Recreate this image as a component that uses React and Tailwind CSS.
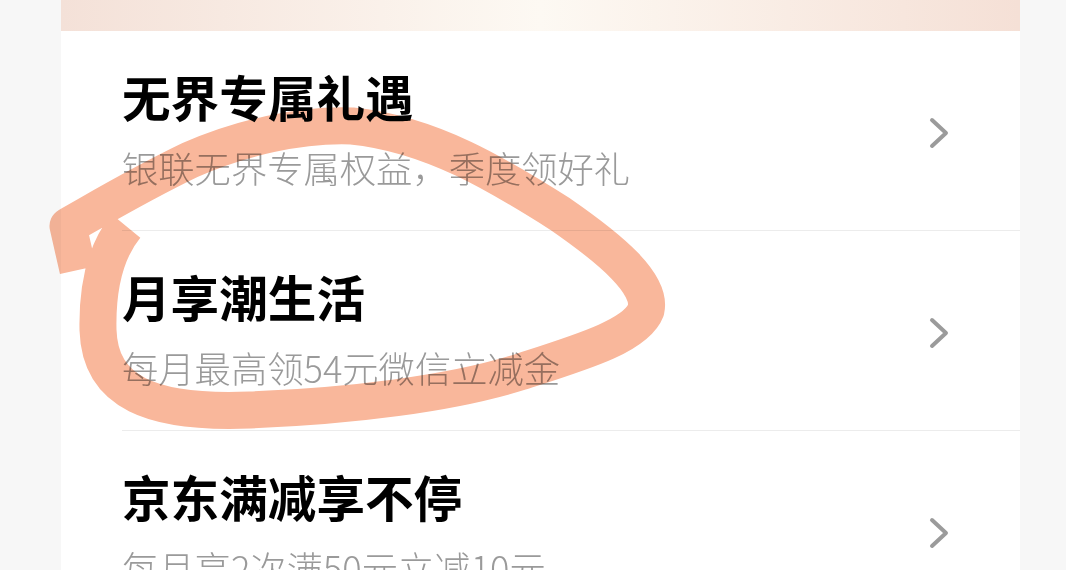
import React from "react";

const rows = [
  { title: "无界专属礼遇", sub: "银联无界专属权益，季度领好礼" },
  { title: "月享潮生活", sub: "每月最高领54元微信立减金" },
  { title: "京东满减享不停", sub: "每月享2次满50元立减10元" },
];

function Chevron() {
  return (
    <svg width="20" height="32" viewBox="0 0 20 32" fill="none">
      <polyline points="3,3 17,16 3,29" stroke="#9b9b9b" strokeWidth="4" strokeLinecap="round" strokeLinejoin="round" />
    </svg>
  );
}

export default function App() {
  return (
    <div
      className="relative w-[1066px] h-[570px] overflow-hidden bg-[#f7f7f7]"
      style={{ fontFamily: '"Noto Sans CJK SC", "Noto Sans", sans-serif' }}
    >
      <div className="ml-[61px] w-[959px] h-full bg-white">
        <div className="h-[31px] bg-gradient-to-r from-[#f4e1d8] via-[#fdf9f3] to-[#f5e0d6]" />
        {rows.map((r, i) => (
          <div key={i} className="pl-[61px]">
            <div className={`h-[200px] flex items-start justify-between pr-[71px] ${i < 2 ? "border-b border-[#ececec]" : ""}`}>
              <div className="pt-[40px] flex flex-col">
                <div className="text-[48.6px] leading-[50px] font-bold text-black">{r.title}</div>
                <div className="mt-[28px] text-[36.3px] leading-[36px] font-light text-[#9a9a9a]">{r.sub}</div>
              </div>
              <div className="mt-[86px]">
                <Chevron />
              </div>
            </div>
          </div>
        ))}
      </div>
      <svg
        className="absolute top-0 left-0 pointer-events-none mix-blend-multiply"
        width="1066"
        height="570"
        viewBox="0 0 1066 570"
      >
        <path
          d="M 78 270 L 68 226 C 100 208 140 184 190 160 C 240 138 300 124 352 126 C 432 134 500 176 560 214 C 612 250 652 284 646 310 C 636 336 582 352 520 372 C 450 394 350 406 250 410 C 150 414 100 392 98 330 C 97 282 108 248 126 226"
          stroke="#f9b79b"
          strokeWidth="37"
          fill="none"
          strokeLinecap="butt"
          strokeLinejoin="round"
        />
      </svg>
    </div>
  );
}
